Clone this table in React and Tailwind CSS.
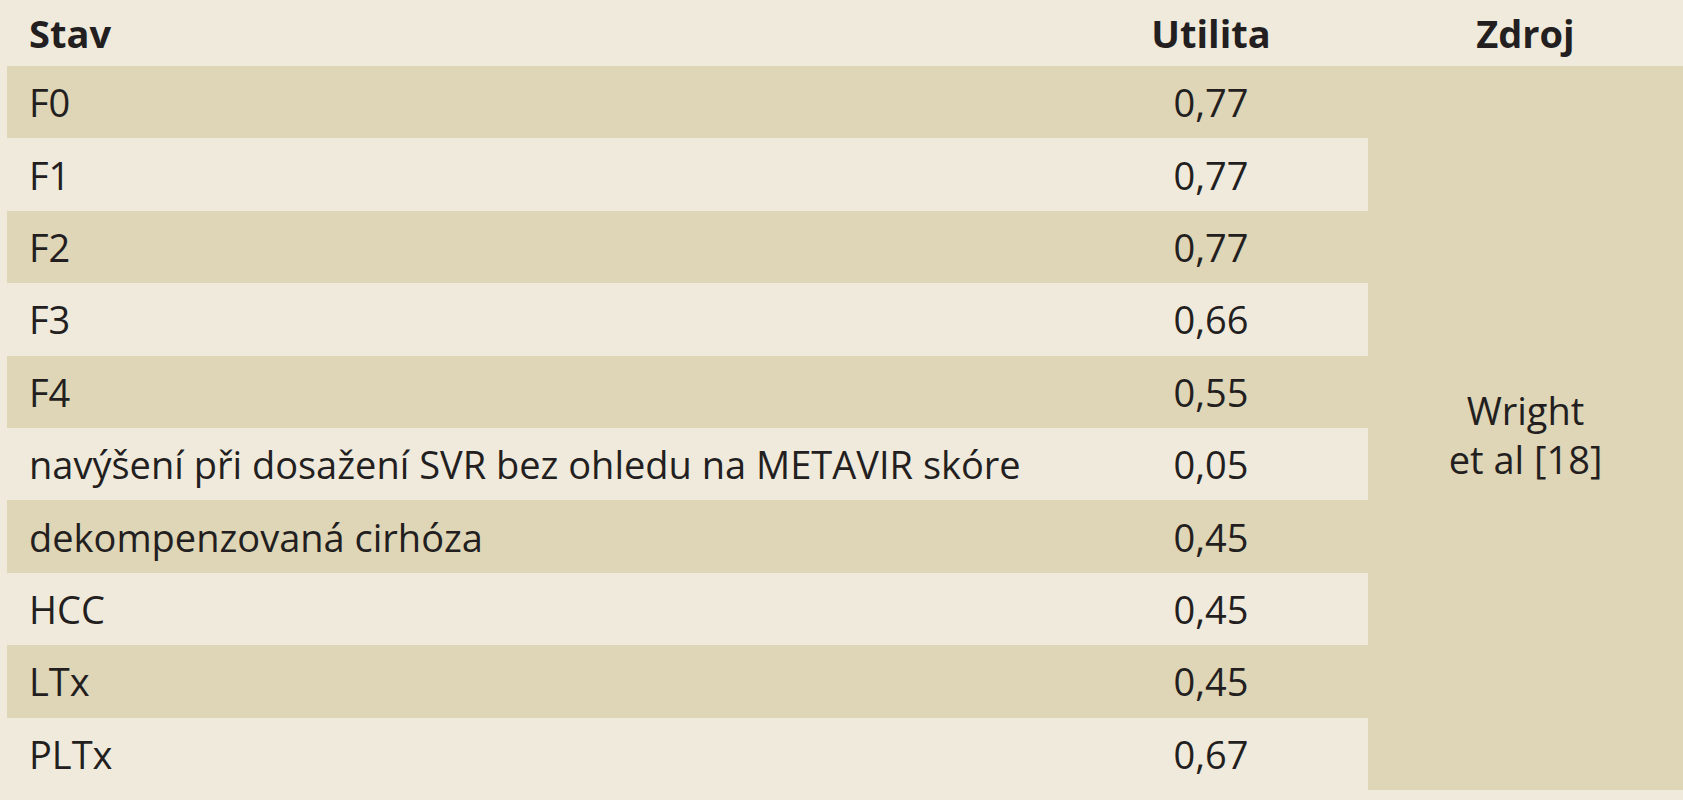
import React from "react";

const rows = [
  { stav: "F0", utilita: "0,77" },
  { stav: "F1", utilita: "0,77" },
  { stav: "F2", utilita: "0,77" },
  { stav: "F3", utilita: "0,66" },
  { stav: "F4", utilita: "0,55" },
  { stav: "navýšení při dosažení SVR bez ohledu na METAVIR skóre", utilita: "0,05" },
  { stav: "dekompenzovaná cirhóza", utilita: "0,45" },
  { stav: "HCC", utilita: "0,45" },
  { stav: "LTx", utilita: "0,45" },
  { stav: "PLTx", utilita: "0,67" },
];

function App() {
  return (
    <div className="w-full h-[800px] overflow-hidden bg-[#f0eadd] pl-[7px] text-[#231f20] font-['Open_Sans',sans-serif] text-[38px] leading-none">
      <div className="grid grid-cols-[1047px_314px_1fr] grid-rows-[66px_repeat(10,72.4px)] bg-[#f0eadd]">
        <div className="flex items-center pl-[22px] font-bold">Stav</div>
        <div className="flex items-center justify-center font-bold">Utilita</div>
        <div className="flex items-center justify-center font-bold">Zdroj</div>

        {rows.map((r, i) => {
          const bg = i % 2 === 0 ? "bg-[#dfd5b7]" : "bg-[#f0eadd]";
          return (
            <React.Fragment key={i}>
              <div
                className={`flex items-center pl-[22px] ${bg}`}
                style={{ gridRow: i + 2, gridColumn: 1 }}
              >
                {r.stav}
              </div>
              <div
                className={`flex items-center justify-center ${bg}`}
                style={{ gridRow: i + 2, gridColumn: 2 }}
              >
                {r.utilita}
              </div>
            </React.Fragment>
          );
        })}

        <div className="col-start-3 row-start-2 row-span-10 flex flex-col items-center justify-center bg-[#dfd5b7] pt-[14px] leading-[49px]">
          <span>Wright</span>
          <span>et al [18]</span>
        </div>
      </div>
    </div>
  );
}

export default App;
